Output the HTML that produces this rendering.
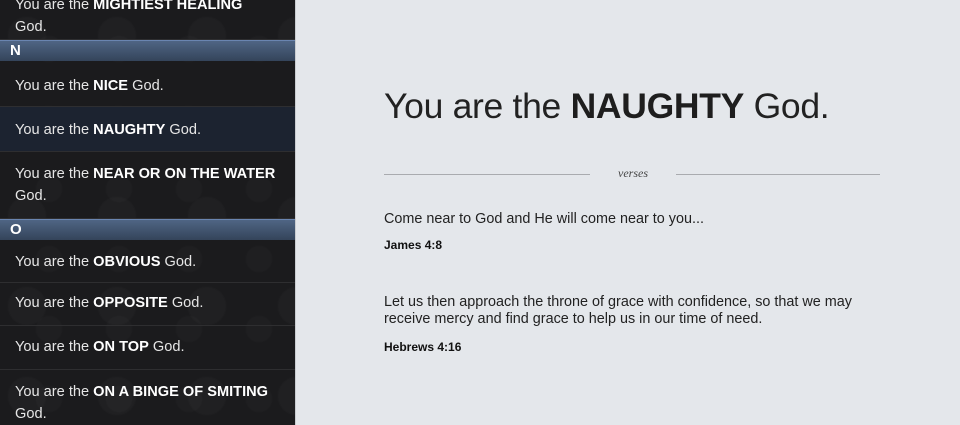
<!DOCTYPE html>
<html><head><meta charset="utf-8"><style>
*{margin:0;padding:0;box-sizing:border-box}
body{width:960px;height:425px;overflow:hidden;background:#e4e7eb;font-family:"Liberation Sans",sans-serif;position:relative}
#side{position:absolute;left:0;top:0;width:296px;height:425px;background:#1b1b1d;border-right:1px solid #c9ccd0;overflow:hidden}
#side::before{content:"";position:absolute;inset:0;background:radial-gradient(circle at 30% 40%,rgba(255,255,255,.025) 0 18px,transparent 20px) 0 0/90px 90px,radial-gradient(circle at 70% 70%,rgba(255,255,255,.02) 0 12px,transparent 14px) 0 0/70px 70px}
.row{position:absolute;left:0;width:295px;color:#e6e6e6;font-size:14.6px;padding-left:15px;border-bottom:1px solid #2e2e30;line-height:22px}
.row b{color:#fff}
.hd{position:absolute;left:0;width:295px;height:21px;background:linear-gradient(#4f6584,#34445a);border-top:1px solid #6a85b0;color:#fff;font-weight:bold;font-size:15px;padding-left:10px;line-height:20px}
.sel{background:#1c2330}
h1{position:absolute;left:384px;top:86px;font-size:35.5px;font-weight:normal;color:#222;white-space:nowrap;letter-spacing:-0.3px}
h1 b{color:#1e1e1e}
.line{position:absolute;top:174px;height:1px;background:#a9abaf}
.vs{position:absolute;left:618px;top:166px;font-family:"Liberation Serif",serif;font-style:italic;font-size:12px;color:#444}
.p{position:absolute;left:384px;font-size:14.4px;color:#222;line-height:17px;white-space:nowrap}
.ref{position:absolute;left:384px;font-size:12px;font-weight:bold;color:#111}
</style></head><body>
<div id="side">
<div class="row" style="top:-6px;height:46px;padding-top:0">You are the <b>MIGHTIEST HEALING</b><br>God.</div>
<div class="hd" style="top:40px">N</div>
<div class="row" style="top:61px;height:46px;padding-top:14px">You are the <b>NICE</b> God.</div>
<div class="row sel" style="top:107px;height:45px;padding-top:12px">You are the <b>NAUGHTY</b> God.</div>
<div class="row" style="top:152px;height:67px;padding-top:11px">You are the <b>NEAR OR ON THE WATER</b><br>God.</div>
<div class="hd" style="top:219px">O</div>
<div class="row" style="top:240px;height:43px;padding-top:11px">You are the <b>OBVIOUS</b> God.</div>
<div class="row" style="top:283px;height:43px;padding-top:9px">You are the <b>OPPOSITE</b> God.</div>
<div class="row" style="top:326px;height:44px;padding-top:10px">You are the <b>ON TOP</b> God.</div>
<div class="row" style="top:370px;height:60px;padding-top:11px;border:none">You are the <b>ON A BINGE OF SMITING</b><br>God.</div>
</div>
<h1>You are the <b>NAUGHTY</b> God.</h1>
<div class="line" style="left:384px;width:206px"></div>
<div class="vs">verses</div>
<div class="line" style="left:676px;width:204px"></div>
<div class="p" style="top:211px">Come near to God and He will come near to you...</div>
<div class="ref" style="top:238px">James 4:8</div>
<div class="p" style="top:294px">Let us then approach the throne of grace with confidence, so that we may<br>receive mercy and find grace to help us in our time of need.</div>
<div class="ref" style="top:340px">Hebrews 4:16</div>
</body></html>
